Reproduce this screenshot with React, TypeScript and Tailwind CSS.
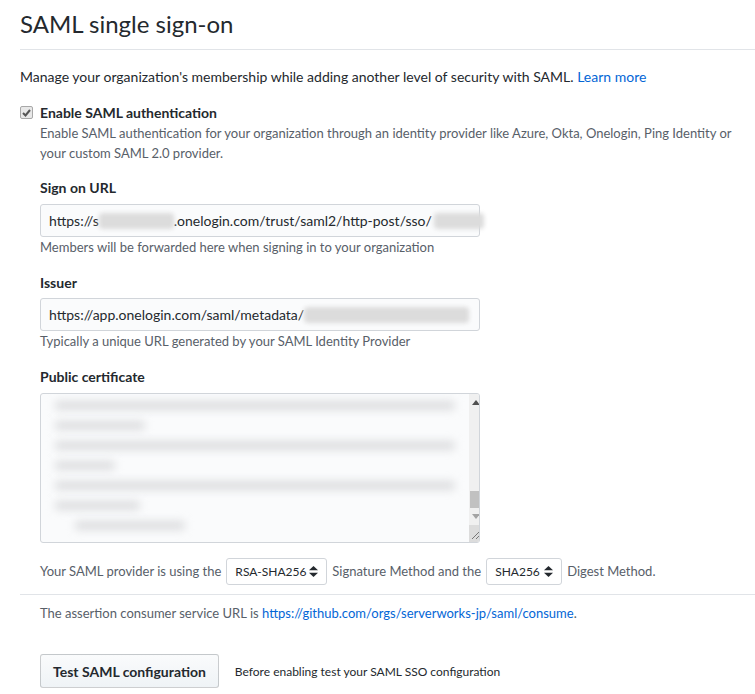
const font = "font-['Lato','Liberation_Sans',sans-serif]";

function Blur({ className }: { className: string }) {
  return <span className={`inline-block shrink-0 rounded-sm bg-[#dcdcdc] blur-[2px] ${className}`} />;
}

function SelectBox({ value, width }: { value: string; width: string }) {
  return (
    <span
      className={`mx-[5px] inline-flex h-[27px] shrink-0 items-center justify-between whitespace-nowrap rounded-[3px] border border-[#d1d5da] bg-white px-[8px] align-middle text-[12px] text-[#24292e] ${width}`}
    >
      {value}
      <svg className="h-[11px] w-[9px]" viewBox="0 0 9 11" fill="#24292e">
        <path d="M4.5 0 9 4.3H0Z" />
        <path d="M4.5 11 0 6.7h9Z" />
      </svg>
    </span>
  );
}

function CertificateBox() {
  const rows = [
    "w-[400px]",
    "w-[90px]",
    "w-[400px]",
    "w-[60px]",
    "w-[400px]",
    "w-[85px]",
    "ml-[20px] w-[110px]",
  ];
  return (
    <div className="flex h-[150px] w-[440px] overflow-hidden rounded-[3px] border border-[#d1d5da] bg-[#fafbfc]">
      <div className="flex flex-1 flex-col gap-[11px] px-[14px] pt-[7px]">
        {rows.map((w, i) => (
          <span key={i} className={`block h-[9px] rounded-sm bg-[#dcdddf] blur-[4px] ${w}`} />
        ))}
      </div>
      <div className="flex w-[17px] flex-col bg-[#f0f0f0]">
        <div className="flex h-[17px] items-center justify-center">
          <svg width="8" height="5" viewBox="0 0 8 5" fill="#505050">
            <path d="M4 0 8 5H0Z" />
          </svg>
        </div>
        <div className="relative flex-1">
          <div className="absolute left-[1px] right-[1px] top-[80px] h-[17px] bg-[#c1c1c1]" />
        </div>
        <div className="flex h-[17px] items-center justify-center">
          <svg width="8" height="5" viewBox="0 0 8 5" fill="#a3a3a3">
            <path d="M0 0h8L4 5Z" />
          </svg>
        </div>
        <div className="flex h-[17px] items-end justify-end bg-[#dcdcdc] p-[2px]">
          <svg width="10" height="10" viewBox="0 0 10 10" stroke="#777" strokeWidth="1">
            <path d="M1 9 9 1M5 9 9 5" />
          </svg>
        </div>
      </div>
    </div>
  );
}

export default function App() {
  return (
    <div className={`min-h-screen overflow-hidden bg-white pl-5 text-[14px] leading-[21px] text-[#24292e] ${font}`}>
      <div className="border-b border-[#e1e4e8] pb-[7px] pt-[6px]">
        <h2 className="text-[24px] font-normal leading-[36px]">SAML single sign-on</h2>
      </div>

      <p className="mt-4">
        Manage your organization's membership while adding another level of security with SAML.{" "}
        <a className="text-[#0366d6]">Learn more</a>
      </p>

      <div className="mt-[15px] flex">
        <span className="mr-[7px] mt-[4px] flex h-[13px] w-[13px] items-center justify-center rounded-[2px] border border-[#a8a8a8] bg-[#e8e8e8]">
          <svg width="9" height="8" viewBox="0 0 9 8" fill="none" stroke="#555" strokeWidth="2">
            <path d="M1 4 3.5 6.5 8 1" />
          </svg>
        </span>
        <div>
          <div className="font-bold">Enable SAML authentication</div>
          <p className="text-[13px] leading-[20px] text-[#586069]">
            Enable SAML authentication for your organization through an identity provider like Azure, Okta, Onelogin, Ping Identity or
            <br />
            your custom SAML 2.0 provider.
          </p>

          <dl className="mt-[14px]">
            <dt className="mb-[6px] font-bold">Sign on URL</dt>
            <dd className="flex h-[33px] w-[440px] items-center whitespace-nowrap rounded-[3px] border border-[#d1d5da] bg-[#fafbfc] px-2">
              https://s<Blur className="h-[16px] w-[75px]" />.onelogin.com/trust/saml2/http-post/sso/
              <Blur className="ml-[2px] h-[16px] w-[50px]" />
            </dd>
            <dd className="text-[13px] leading-[20px] text-[#586069]">
              Members will be forwarded here when signing in to your organization
            </dd>
          </dl>

          <dl className="mt-[15px]">
            <dt className="mb-[5px] font-bold">Issuer</dt>
            <dd className="flex h-[33px] w-[440px] items-center whitespace-nowrap rounded-[3px] border border-[#d1d5da] bg-[#fafbfc] px-2">
              https://app.onelogin.com/saml/metadata/
              <Blur className="h-[16px] w-[165px]" />
            </dd>
            <dd className="text-[13px] leading-[20px] text-[#586069]">
              Typically a unique URL generated by your SAML Identity Provider
            </dd>
          </dl>

          <dl className="mt-[15px]">
            <dt className="mb-[6px] font-bold">Public certificate</dt>
            <dd>
              <CertificateBox />
            </dd>
          </dl>

          <p className="mt-[15px] flex items-center whitespace-nowrap text-[13px] text-[#586069]">
            Your SAML provider is using the
            <SelectBox value="RSA-SHA256" width="w-[101px]" />
            Signature Method and the
            <SelectBox value="SHA256" width="w-[76px]" />
            Digest Method.
          </p>
        </div>
      </div>

      <div className="mt-[9px] border-t border-[#e1e4e8] pl-5 pt-[8px] text-[13px] leading-[20px] text-[#586069]">
        The assertion consumer service URL is{" "}
        <a className="text-[#0366d6]">https://github.com/orgs/serverworks-jp/saml/consume</a>.
      </div>

      <div className="mt-[31px] flex items-center pl-5">
        <button className="h-[34px] rounded-[3px] border border-[rgba(27,31,35,0.2)] bg-gradient-to-b from-[#fafbfc] to-[#eff3f6] px-3 font-bold">
          Test SAML configuration
        </button>
        <span className="ml-4 text-[12px] text-[#24292e]">Before enabling test your SAML SSO configuration</span>
      </div>
    </div>
  );
}
